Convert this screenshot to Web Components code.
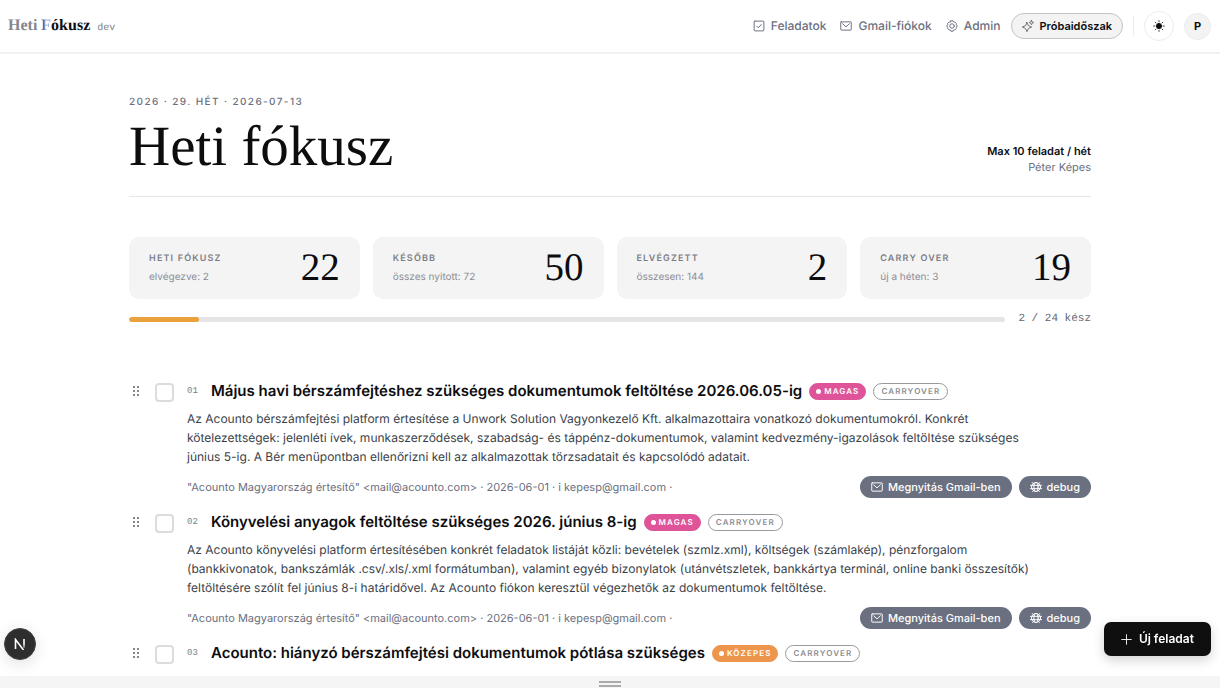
<!DOCTYPE html>
<html lang="hu">
<head>
<meta charset="utf-8">
<title>Heti Fókusz</title>
<style>
  :root {
    --sans: Inter, "Liberation Sans", sans-serif;
    --serif: "Liberation Serif", serif;
    --mono: "Liberation Mono", monospace;
    --ink: #0d0d0f;
    --slate: #6b7080;
  }
  html, body { margin: 0; }
  body { font-family: var(--sans); font-size: 12px; line-height: 16px; color: var(--ink); background: #fff; text-rendering: geometricPrecision; -webkit-font-smoothing: antialiased; }
</style>
</head>
<body>
<app-shell>
  <app-header slot="header">
    <nav-link icon="check" href="#feladatok">Feladatok</nav-link>
    <nav-link icon="mail" href="#gmail">Gmail-fiókok</nav-link>
    <nav-link icon="gear" href="#admin">Admin</nav-link>
  </app-header>

  <page-title eyebrow="2026 · 29. HÉT · 2026-07-13" heading="Heti fókusz">
    <strong slot="limit">Max 10 feladat / hét</strong>
    <span slot="owner">Péter Képes</span>
  </page-title>

  <stat-grid>
    <stat-card label="HETI FÓKUSZ" value="22">elvégezve: 2</stat-card>
    <stat-card label="KÉSŐBB" value="50">összes nyitott: 72</stat-card>
    <stat-card label="ELVÉGZETT" value="2">összesen: 144</stat-card>
    <stat-card label="CARRY OVER" value="19">új a héten: 3</stat-card>
  </stat-grid>

  <week-progress percent="8">2 / 24 kész</week-progress>

  <task-list>
    <task-item number="01" heading="Május havi bérszámfejtéshez szükséges dokumentumok feltöltése 2026.06.05-ig">
      <tag-pill slot="tags" kind="high">MAGAS</tag-pill>
      <tag-pill slot="tags" kind="outline">CARRYOVER</tag-pill>
      <task-detail meta='"Acounto Magyarország értesítő" &lt;mail@acounto.com&gt; · 2026-06-01 · i kepesp@gmail.com ·'>Az Acounto bérszámfejtési platform értesítése a Unwork Solution Vagyonkezelő Kft. alkalmazottaira vonatkozó dokumentumokról. Konkrét kötelezettségek: jelenléti ívek, munkaszerződések, szabadság- és táppénz-dokumentumok, valamint kedvezmény-igazolások feltöltése szükséges június 5-ig. A Bér menüpontban ellenőrizni kell az alkalmazottak törzsadatait és kapcsolódó adatait.</task-detail>
    </task-item>
    <task-item number="02" heading="Könyvelési anyagok feltöltése szükséges 2026. június 8-ig">
      <tag-pill slot="tags" kind="high">MAGAS</tag-pill>
      <tag-pill slot="tags" kind="outline">CARRYOVER</tag-pill>
      <task-detail meta='"Acounto Magyarország értesítő" &lt;mail@acounto.com&gt; · 2026-06-01 · i kepesp@gmail.com ·'>Az Acounto könyvelési platform értesítésében konkrét feladatok listáját közli: bevételek (szmlz.xml), költségek (számlakép), pénzforgalom (bankkivonatok, bankszámlák .csv/.xls/.xml formátumban), valamint egyéb bizonylatok (utánvétszletek, bankkártya terminál, online banki összesítők) feltöltésére szólít fel június 8-i határidővel. Az Acounto fiókon keresztül végezhetők az dokumentumok feltöltése.</task-detail>
    </task-item>
    <task-item number="03" heading="Acounto: hiányzó bérszámfejtési dokumentumok pótlása szükséges">
      <tag-pill slot="tags" kind="medium">KÖZEPES</tag-pill>
      <tag-pill slot="tags" kind="outline">CARRYOVER</tag-pill>
    </task-item>
  </task-list>

  <dev-badge slot="overlay"></dev-badge>
  <new-task-button slot="overlay">Új feladat</new-task-button>
</app-shell>

<script>
const ICONS = {
  check: '<rect x="1.5" y="1.5" width="13" height="13" rx="1"/><path d="M5 8.3l2.1 2.1L11 6"/>',
  mail: '<rect x="1" y="2.5" width="14" height="11" rx=".6"/><path d="M3.500 5L8 9.200 12.500 5"/>',
  gear: '<path d="M6.600 1h2.800l.7 1.600 1.700.1 2 2-.1 1.800L15.200 8l-1.500 1.500.1 1.800-2 2-1.700.1-.7 1.600H6.600l-.7-1.600-1.700-.1-2-2 .1-1.800L.8 8l1.500-1.500-.1-1.800 2-2 1.700-.1z"/><circle cx="8" cy="8" r="3"/>',
  sparkle: '<path d="M6.600 3.200l1.900 4.300 4.300 1.900-4.300 1.900-1.900 4.300-1.900-4.300L.4 9.400l4.300-1.900z"/><path d="M12.600.4l.9 2.100 2.100.9-2.100.9-.9 2.100-.9-2.100-2.100-.9 2.100-.9z"/>',
  globe: '<circle cx="8" cy="8" r="6"/><ellipse cx="8" cy="8" rx="2.800" ry="6"/><path d="M.6 5.800h14.800M.6 10.200h14.800M3 2l2.500 2.500M13 2l-2.500 2.500M3.500 14L6 11.500M12.500 14L10 11.500"/>',
  plus: '<path d="M8 1v14M1 8h14"/>',
  sun: '<circle cx="8" cy="8" r="3.400" fill="currentColor"/><path stroke-width="1" d="M8 .8v1.700M8 13.500v1.700M.8 8h1.700M13.500 8h1.700M2.900 2.900l1.200 1.200M11.900 11.900l1.200 1.200M2.900 13.100l1.200-1.200M11.900 4.100l1.200-1.200"/>'
};

function define(name, render) {
  customElements.define(name, class extends HTMLElement {
    connectedCallback() {
      if (this.shadowRoot) return;
      const template = document.createElement('template');
      template.innerHTML = render(this);
      this.attachShadow({ mode: 'open' }).append(template.content.cloneNode(true));
    }
  });
}
const esc = s => (s || '').replace(/&/g, '&amp;').replace(/</g, '&lt;').replace(/>/g, '&gt;').replace(/"/g, '&quot;');

define('app-icon', el => `
  <style>
    :host { display: inline-flex; flex: none; width: 12px; height: 12px; }
    svg { width: 100%; height: 100%; fill: none; stroke: currentColor; stroke-width: 1.3; stroke-linejoin: round; stroke-linecap: round; }
  </style>
  <svg viewBox="0 0 16 16" aria-hidden="true">${ICONS[el.getAttribute('name')]}</svg>`);

define('app-shell', () => `
  <style>
    :host { display: flex; flex-direction: column; min-height: 100vh; }
    main { flex: 1; box-sizing: border-box; width: 100%; max-width: 1002px; margin: 0 auto; padding: 40px 20px 8px; }
    footer { display: flex; flex-direction: column; align-items: center; justify-content: flex-end; gap: 2px; height: 12px; padding-bottom: 1px; box-sizing: border-box; background: #f5f5f5; }
    footer i { width: 22px; height: 2px; background: #aaa; }
  </style>
  <slot name="header"></slot>
  <main><slot></slot></main>
  <footer><i></i><i></i></footer>
  <slot name="overlay"></slot>`);

define('app-header', () => `
  <style>
    :host { display: flex; align-items: center; justify-content: space-between; box-sizing: border-box; height: 54px; padding: 0 9px 0 8px; border-bottom: 2px solid #f1f1f2; }
    .brand { display: flex; align-items: baseline; gap: 7px; color: var(--ink); text-decoration: none; }
    .name { font: 700 16px/20px var(--serif); }
    .name .soft { color: #85868a; }
    .name .f { color: transparent; background: linear-gradient(90deg, #3a4258 15%, #8aa6e0 40%); -webkit-background-clip: text; background-clip: text; }
    .env { font: 10px/12px var(--mono); color: #7d7f86; }
    nav { display: flex; align-items: center; gap: 14px; }
    .actions { display: flex; align-items: center; gap: 10px; }
    button { font-family: inherit; color: var(--ink); box-sizing: border-box; padding: 0; display: inline-flex; align-items: center; justify-content: center; cursor: pointer; }
    .trial { gap: 6px; height: 26px; padding: 0 10px; border: 1px solid #c4c4c6; border-radius: 13px; background: #f3f3f4; font-size: 11px; font-weight: 600; }
    .trial app-icon { color: #6f7076; }
    .line { width: 1px; height: 20px; background: #ececee; }
    .round { width: 30px; height: 30px; border: 1px solid #ececee; border-radius: 50%; background: #fff; }
    .avatar { width: 27px; height: 27px; border: 1px solid #ebebed; border-radius: 50%; background: #f3f3f4; font-size: 11px; font-weight: 700; }
  </style>
  <a class="brand" href="#"><span class="name"><span class="soft">Heti</span> <span class="f">F</span>ókusz</span><span class="env">dev</span></a>
  <div class="actions">
    <nav><slot></slot></nav>
    <button class="trial"><app-icon name="sparkle"></app-icon>Próbaidőszak</button>
    <span class="line"></span>
    <button class="round" aria-label="Téma"><app-icon name="sun"></app-icon></button>
    <button class="avatar">P</button>
  </div>`);

define('nav-link', el => `
  <style>
    :host { display: block; }
    a { display: flex; align-items: center; gap: 6px; color: var(--slate); text-decoration: none; font-weight: 450; }
  </style>
  <a href="${esc(el.getAttribute('href'))}"><app-icon name="${el.getAttribute('icon')}"></app-icon><slot></slot></a>`);

define('page-title', el => `
  <style>
    :host { display: flex; justify-content: space-between; align-items: flex-end; padding-bottom: 21px; border-bottom: 1px solid #e6e6e8; }
    p { margin: 0; font-size: 10px; line-height: 16px; font-weight: 500; letter-spacing: .14em; color: var(--slate); }
    h1 { margin: 8px 0 0; font: 400 57px/57px var(--serif); }
    .side { display: flex; flex-direction: column; align-items: flex-end; font-size: 11px; line-height: 16px; color: var(--slate); }
    ::slotted(strong) { font-weight: 600; color: var(--ink); }
  </style>
  <div><p>${esc(el.getAttribute('eyebrow'))}</p><h1>${esc(el.getAttribute('heading'))}</h1></div>
  <div class="side"><slot name="limit"></slot><slot name="owner"></slot></div>`);

define('stat-grid', () => `
  <style>:host { display: grid; grid-template-columns: repeat(4, 1fr); gap: 13px; margin-top: 40px; }</style>
  <slot></slot>`);

define('stat-card', el => `
  <style>
    :host { display: flex; align-items: center; justify-content: space-between; box-sizing: border-box; height: 62px; padding: 0 20px; border-radius: 10px; background: #f4f4f4; }
    h2 { margin: 0 0 4px; font-size: 9px; line-height: 14px; font-weight: 600; letter-spacing: .13em; color: #7c7e86; }
    p { margin: 0; font-size: 10px; line-height: 14px; color: #8c8e94; }
    b { font: 400 39px/44px var(--serif); }
  </style>
  <div><h2>${esc(el.getAttribute('label'))}</h2><p><slot></slot></p></div>
  <b>${esc(el.getAttribute('value'))}</b>`);

define('week-progress', el => `
  <style>
    :host { display: flex; align-items: center; gap: 13px; margin-top: 12px; font: 11px/16px var(--mono); color: #62656e; }
    .track { flex: 1; height: 5px; border-radius: 3px; background: #e5e5e8; overflow: hidden; }
    .track i { display: block; height: 100%; width: ${el.getAttribute('percent')}%; border-radius: 3px; background: #e9a23b; }
  </style>
  <div class="track" role="progressbar" aria-valuenow="${el.getAttribute('percent')}"><i></i></div><span><slot></slot></span>`);

define('task-list', () => `
  <style>:host { display: flex; flex-direction: column; gap: 12px; margin-top: 52px; }</style>
  <slot></slot>`);

define('task-item', el => `
  <style>
    :host { display: grid; grid-template-columns: 13px 19px 1fr; column-gap: 13px; align-items: start; }
    .grip { display: grid; grid-template-columns: 2px 2px; gap: 2px; justify-content: center; padding-top: 7px; cursor: grab; }
    .grip i { width: 2px; height: 2px; background: #85878d; }
    input { appearance: none; box-sizing: border-box; width: 19px; height: 19px; margin: 4px 0 0; border: 2px solid #dcdcde; border-radius: 4px; background: #fff; }
    header { display: flex; align-items: center; gap: 7px; min-height: 24px; }
    .num { width: 17px; font: 9px/12px var(--mono); color: #7c7e84; }
    h3 { margin: 0; font-size: 15px; line-height: 24px; font-weight: 600; }
  </style>
  <span class="grip"><i></i><i></i><i></i><i></i><i></i><i></i></span>
  <input type="checkbox" aria-labelledby="title">
  <div>
    <header><span class="num">${esc(el.getAttribute('number'))}</span><h3 id="title">${esc(el.getAttribute('heading'))}</h3><slot name="tags"></slot></header>
    <slot></slot>
  </div>`);

define('tag-pill', el => {
  const kind = el.getAttribute('kind');
  return `
  <style>
    :host { display: inline-flex; align-items: center; gap: 3px; box-sizing: border-box; height: 17px; padding: 0 7px; border: 1px solid #98999d; border-radius: 9px; font-size: 8px; line-height: 12px; font-weight: 600; letter-spacing: .14em; color: #8c8d92; }
    :host([kind=high]) { padding: 0 6px; color: #fff; background: #df5499; border-color: #df5499; }
    :host([kind=medium]) { padding: 0 6px; color: #fff; background: #ee954d; border-color: #ee954d; }
    i { width: 5px; height: 5px; border-radius: 50%; background: #fff; }
  </style>
  ${kind === 'outline' ? '' : '<i></i>'}<slot></slot>`;
});

define('task-detail', el => `
  <style>
    :host { display: block; }
    p { margin: 6px 40px 10px 0; font-size: 12px; line-height: 19px; color: #3b3f4a; }
    footer { display: flex; align-items: center; gap: 7px; }
    .meta { flex: 1; font-size: 11px; line-height: 16px; color: var(--slate); }
    .pill { display: inline-flex; align-items: center; gap: 5px; height: 22px; padding: 0 11px; border: 0; border-radius: 11px; background: #6b7080; color: #fff; font: 500 11px/16px var(--sans); text-decoration: none; }
  </style>
  <p><slot></slot></p>
  <footer>
    <span class="meta">${esc(el.getAttribute('meta'))}</span>
    <a class="pill" href="#gmail"><app-icon name="mail"></app-icon>Megnyitás Gmail-ben</a>
    <button class="pill"><app-icon name="globe"></app-icon>debug</button>
  </footer>`);

define('dev-badge', () => `
  <style>
    :host { position: fixed; left: 4px; bottom: 28px; }
    button { display: grid; place-items: center; width: 32px; height: 32px; padding: 0; border: 1px solid #454545; border-radius: 50%; background: #2e2e2e; box-shadow: 0 4px 16px rgba(0,0,0,.12); }
    svg { width: 12px; height: 12px; fill: none; stroke: #fff; stroke-width: 1.600; }
  </style>
  <button aria-label="Next.js"><svg viewBox="0 0 12 12"><defs><linearGradient id="fade" x1="0" y1="0" x2="0" y2="12" gradientUnits="userSpaceOnUse"><stop offset=".5" stop-color="#fff"/><stop offset="1" stop-color="#fff" stop-opacity="0"/></linearGradient></defs><path d="M1.500 11V1.500L9.500 12"/><path d="M10 1v9" stroke="url(#fade)"/></svg></button>`);

define('new-task-button', () => `
  <style>
    :host { position: fixed; right: 9px; bottom: 32px; }
    button { display: flex; align-items: center; gap: 7px; height: 34px; padding: 0 17px; border: 0; border-radius: 7px; background: #0f0f10; color: #fff; font: 600 12px/16px var(--sans); box-shadow: 0 4px 12px rgba(0,0,0,.18); }
    app-icon { width: 11px; height: 11px; }
  </style>
  <button><app-icon name="plus"></app-icon><slot></slot></button>`);
</script>
</body>
</html>
